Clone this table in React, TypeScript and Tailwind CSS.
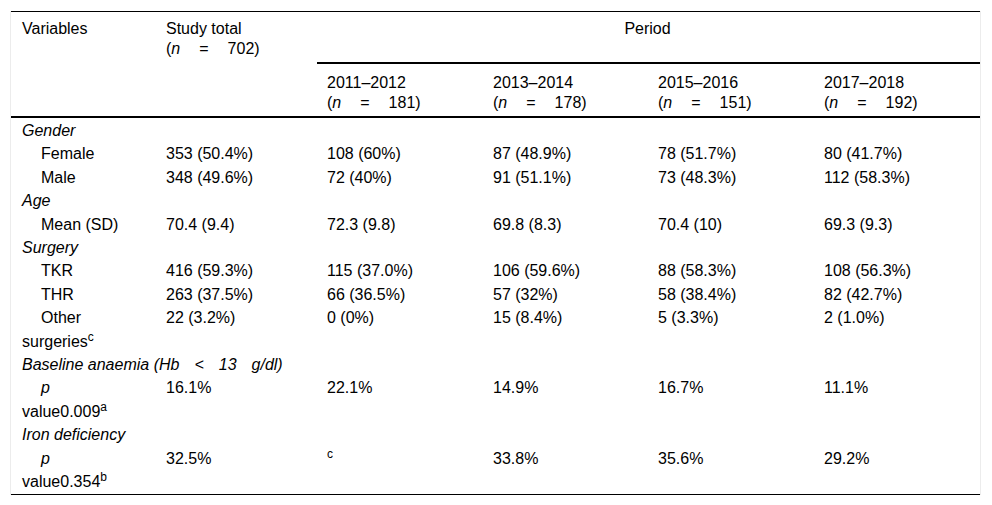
import React from "react";

const GRID = "grid grid-cols-[143px_161px_166px_165px_166px_168px]";

function Sp({ w }: { w: string }) {
  return <span className={`inline-block ${w}`} />;
}

function N({ v }: { v: string }) {
  return (
    <>
      (<i>n</i>
      <span className="inline-block w-[19px]" />=
      <span className="inline-block w-[19px]" />
      {v})
    </>
  );
}

type Row =
  | { kind: "cat"; label: React.ReactNode }
  | { kind: "data"; label: React.ReactNode; cells: React.ReactNode[] };

const rows: Row[] = [
  { kind: "cat", label: "Gender" },
  { kind: "data", label: "Female", cells: ["353 (50.4%)", "108 (60%)", "87 (48.9%)", "78 (51.7%)", "80 (41.7%)"] },
  { kind: "data", label: "Male", cells: ["348 (49.6%)", "72 (40%)", "91 (51.1%)", "73 (48.3%)", "112 (58.3%)"] },
  { kind: "cat", label: "Age" },
  { kind: "data", label: "Mean (SD)", cells: ["70.4 (9.4)", "72.3 (9.8)", "69.8 (8.3)", "70.4 (10)", "69.3 (9.3)"] },
  { kind: "cat", label: "Surgery" },
  { kind: "data", label: "TKR", cells: ["416 (59.3%)", "115 (37.0%)", "106 (59.6%)", "88 (58.3%)", "108 (56.3%)"] },
  { kind: "data", label: "THR", cells: ["263 (37.5%)", "66 (36.5%)", "57 (32%)", "58 (38.4%)", "82 (42.7%)"] },
  {
    kind: "data",
    label: (
      <>
        Other
        <br />
        surgeries<sup>c</sup>
      </>
    ),
    cells: ["22 (3.2%)", "0 (0%)", "15 (8.4%)", "5 (3.3%)", "2 (1.0%)"],
  },
  {
    kind: "cat",
    label: (
      <>
        Baseline anaemia (Hb<Sp w="w-[15px]" />&lt;<Sp w="w-[15px]" />13<Sp w="w-[15px]" />g/dl)
      </>
    ),
  },
  {
    kind: "data",
    label: (
      <>
        <i>p</i>
        <br />
        value0.009<sup>a</sup>
      </>
    ),
    cells: ["16.1%", "22.1%", "14.9%", "16.7%", "11.1%"],
  },
  { kind: "cat", label: "Iron deficiency" },
  {
    kind: "data",
    label: (
      <>
        <i>p</i>
        <br />
        value0.354<sup>b</sup>
      </>
    ),
    cells: ["32.5%", <sup key="c">c</sup>, "33.8%", "35.6%", "29.2%"],
  },
];

export default function App() {
  return (
    <div
      className="min-h-[505px] bg-white pt-[11px] pl-[10px] text-[16px] text-black"
      style={{ fontFamily: '"Liberation Sans", Arial, sans-serif' }}
    >
      <div className="w-[971px] border-x border-[#ececec]">
        <div className="border-t border-black">
          {/* header */}
          <div className={`${GRID} grid-rows-[50px_2px_52px] leading-[20px]`}>
            <div className="col-start-1 row-start-1 row-span-3 pl-[11px] pt-[7px]">Variables</div>
            <div className="col-start-2 row-start-1 row-span-3 pl-3 pt-[7px]">
              Study total
              <br />
              <N v="702" />
            </div>
            <div className="col-start-3 col-span-4 row-start-1 pt-[7px] text-center">Period</div>
            <div className="col-start-3 col-span-4 row-start-2 ml-[2px] bg-black" />
            {[
              ["2011–2012", "181"],
              ["2013–2014", "178"],
              ["2015–2016", "151"],
              ["2017–2018", "192"],
            ].map(([y, n]) => (
              <div key={y} className="row-start-3 pl-3 pt-[9px]">
                {y}
                <br />
                <N v={n} />
              </div>
            ))}
          </div>
          <div className="h-[2px] bg-black" />
          {/* body */}
          <div className={`${GRID} pt-[1px] leading-[23.4px]`}>
            {rows.map((r, i) =>
              r.kind === "cat" ? (
                <div key={i} className="col-span-6 pl-[11px] italic">
                  {r.label}
                </div>
              ) : (
                <React.Fragment key={i}>
                  <div className="pl-[11px] indent-[19px]">{r.label}</div>
                  {r.cells.map((c, j) => (
                    <div key={j} className="pl-3">
                      {c}
                    </div>
                  ))}
                </React.Fragment>
              )
            )}
          </div>
          <div className="h-[1.5px] bg-black" />
        </div>
      </div>
    </div>
  );
}
